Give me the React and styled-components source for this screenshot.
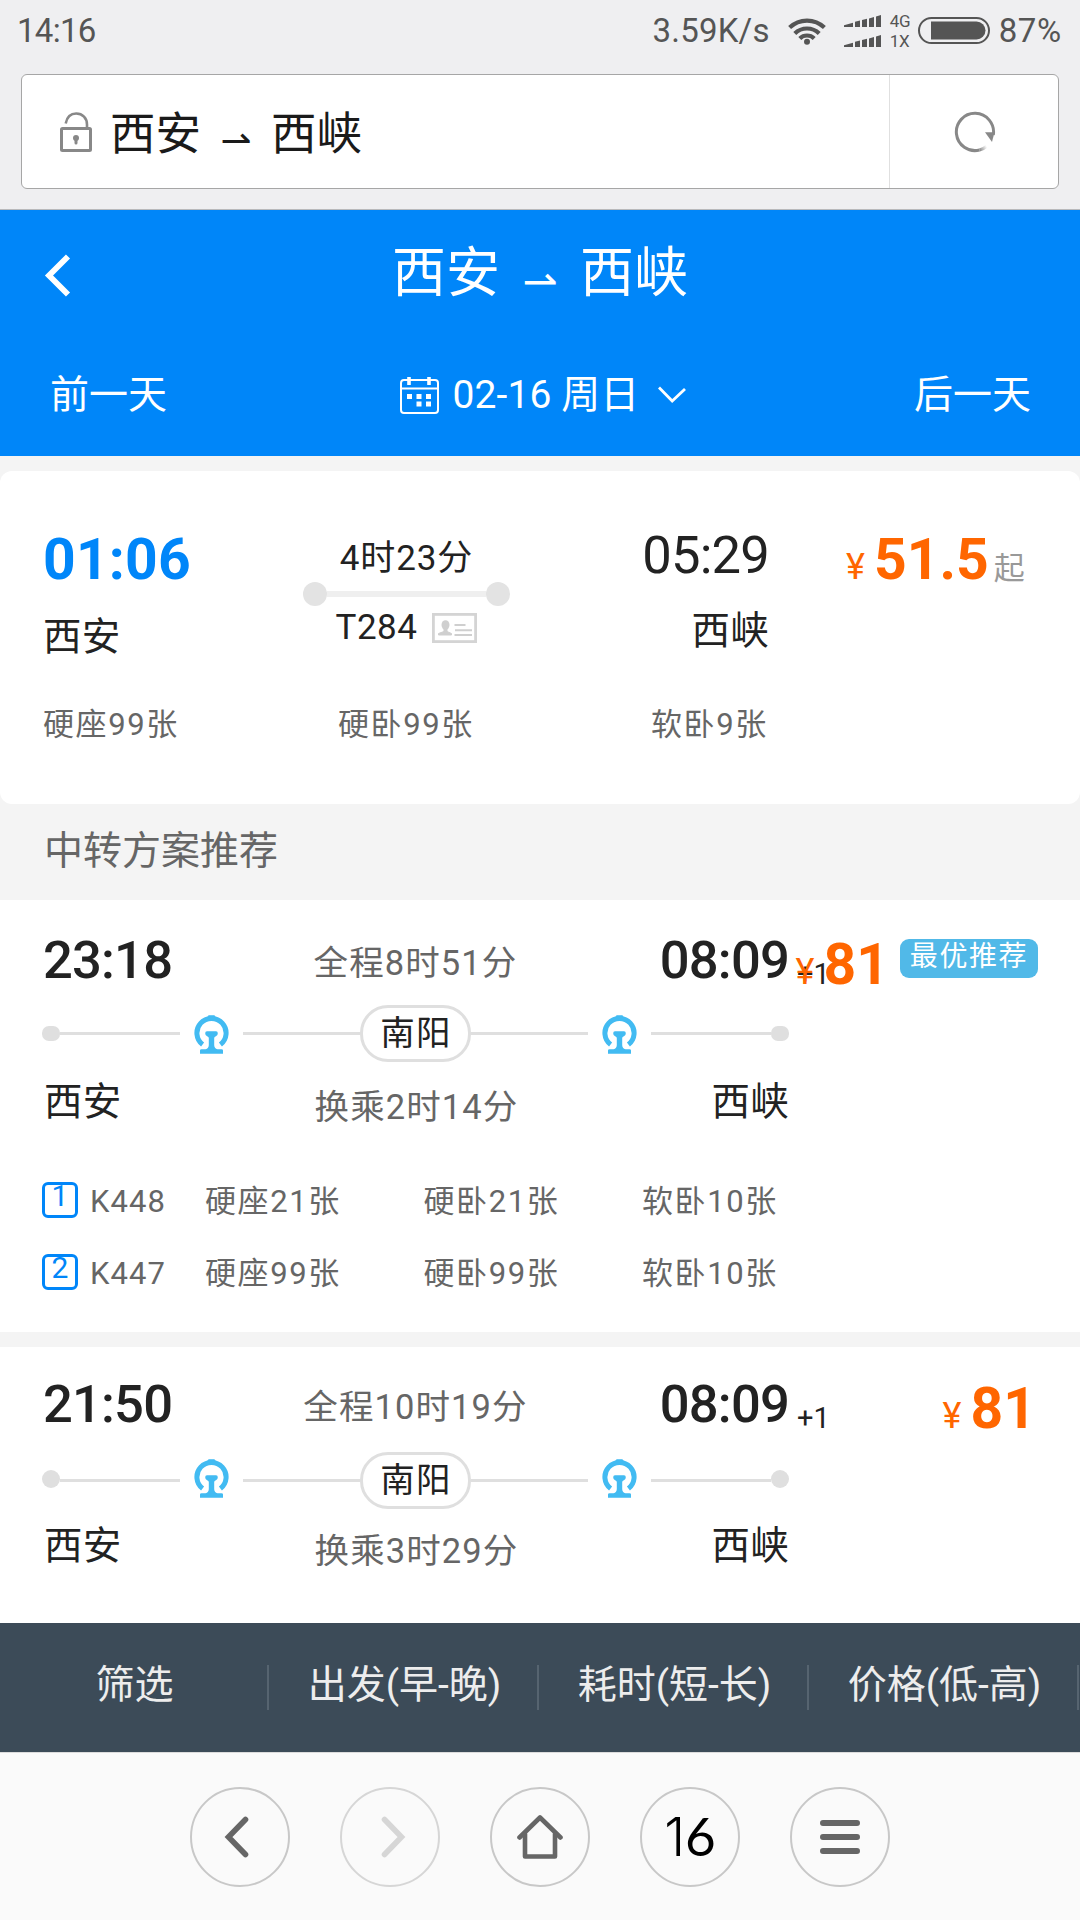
import React from 'react';
import styled, { createGlobalStyle } from 'styled-components';

const BLUE = '#0086f9';
const ORANGE = '#ff6600';
const INK = '#222';
const GREY = '#666';
const RAIL = '#dfdfdf';

const GlobalStyle = createGlobalStyle`
  * { box-sizing: border-box; }
  body {
    margin: 0;
    background: #f4f4f4;
    font-family: Roboto, "Noto Sans CJK SC", sans-serif;
    color: ${INK};
  }
`;

const Screen = styled.div`
  width: 1080px;
  height: 1920px;
  overflow: hidden;
  display: flex;
  flex-direction: column;
  background: #f4f4f4;
  white-space: nowrap;
`;

/* ---------- status bar ---------- */
const StatusBar = styled.div`
  height: 74px;
  padding: 0 18px 13px 17px;
  display: flex;
  align-items: center;
  background: #efeff1;
  color: #555;
  font-size: 33px;
  line-height: 40px;
`;
const Clock = styled.span`
  flex: 1;
  padding-top: 1px;
  letter-spacing: -0.7px;
`;
const Speed = styled.span`
  padding-top: 1px;
  letter-spacing: 0.2px;
  margin-right: 18px;
`;
const SignalStack = styled.div`
  display: flex;
  flex-direction: column;
  gap: 8px;
  margin: 0 8px 0 18px;
`;
const NetStack = styled.div`
  width: 28px;
  display: flex;
  flex-direction: column;
  font-size: 17px;
  line-height: 20px;
  letter-spacing: -0.3px;
`;
const Percent = styled.span`
  padding-top: 1px;
  margin-left: 9px;
  letter-spacing: 0.7px;
`;

/* ---------- address bar ---------- */
const AddressBar = styled.div`
  height: 136px;
  padding: 0 21px;
  background: #efeff1;
  border-bottom: 1px solid #b9b9bb;
`;
const AddressBox = styled.div`
  height: 115px;
  display: flex;
  border: 1px solid #a6a6a6;
  border-radius: 6px;
  background: #fff;
`;
const AddressMain = styled.div`
  flex: 1;
  display: flex;
  align-items: center;
  padding: 0 0 0 38px;
  border-right: 1px solid #e0e0e0;
`;
const AddressText = styled.div`
  display: flex;
  align-items: center;
  margin: 6px 0 0 18px;
  font-size: 45.5px;
  line-height: 60px;
  color: #1a1a1a;
`;
const Reload = styled.div`
  width: 168px;
  padding-left: 2px;
  display: flex;
  align-items: center;
  justify-content: center;
`;
const Harpoon = styled.span`
  display: inline-block;
  width: ${(p) => p.$width}px;
  margin: ${(p) => p.$drop}px ${(p) => p.$gap}px 0;
  font-family: "DejaVu Sans", sans-serif;
  font-size: ${(p) => p.$size}px;
  line-height: 1;
  text-align: center;
`;

/* ---------- blue header ---------- */
const Header = styled.header`
  height: 246px;
  background: ${BLUE};
  color: #fff;
`;
const TitleRow = styled.div`
  height: 124px;
  display: grid;
  grid-template-columns: 90px 1fr 90px;
  align-items: center;
`;
const BackSlot = styled.div`
  padding: 11px 0 0 44px;
`;
const Title = styled.h1`
  margin: 0;
  padding-top: 4px;
  display: flex;
  align-items: center;
  justify-content: center;
  font-size: 54px;
  line-height: 70px;
  font-weight: 400;
`;
const DayRow = styled.div`
  height: 122px;
  padding: 0 49px 0 50px;
  display: flex;
  justify-content: space-between;
  align-items: center;
  font-size: 39px;
  line-height: 56px;
`;
const DatePick = styled.div`
  margin-left: 5px;
  display: flex;
  align-items: center;
`;
const DateText = styled.span`
  margin: 0 19px 0 14px;
  letter-spacing: 0.1px;
`;

/* ---------- shared ---------- */
const Station = styled.div`
  font-size: 38.5px;
  letter-spacing: 0.3px;
  line-height: 48px;
  text-align: ${(p) => p.$align || 'left'};
`;
const Price = styled.div`
  display: flex;
  align-items: baseline;
  color: ${ORANGE};
  line-height: 60px;
`;
const Yen = styled.span`
  width: 28px;
  font-size: 36px;
`;
const Amount = styled.span`
  font-size: 57px;
  font-weight: 700;
`;
const From = styled.span`
  margin-left: 5px;
  font-size: 31px;
  color: #999;
`;
const Seat = styled.span`
  font-size: 31px;
  letter-spacing: ${(p) => (p.$tight ? 1.1 : 1.6)}px;
  line-height: 40px;
  color: ${GREY};
`;

/* ---------- direct train ---------- */
const DirectCard = styled.section`
  height: 333px;
  margin-top: 15px;
  border-radius: 12px;
  background: #fff;
`;
const DirectTop = styled.div`
  height: 234px;
  padding-left: 43px;
  display: flex;
`;
const DepartCol = styled.div`
  width: 260px;
  padding-top: 59px;
`;
const DepartTime = styled.div`
  font-size: 57px;
  line-height: 60px;
  font-weight: 700;
  color: ${BLUE};
  letter-spacing: 0.2px;
  margin-bottom: 23px;
`;
const TripCol = styled.div`
  width: 207px;
  padding-top: 68px;
  font-size: 35px;
  line-height: 40px;
  letter-spacing: 0.9px;
  text-align: center;
`;
const TripLine = styled.div`
  height: 24px;
  margin: 3px 0 2px;
  display: flex;
  align-items: center;
`;
const TripDot = styled.i`
  width: 24px;
  height: 24px;
  border-radius: 50%;
  background: #e3e3e3;
`;
const TripBar = styled.i`
  flex: 1;
  height: 6px;
  background: #efefef;
`;
const TrainNo = styled.div`
  display: flex;
  justify-content: center;
  align-items: center;
  gap: 15px;
  letter-spacing: 0.5px;
`;
const ArriveCol = styled.div`
  width: 259px;
  padding-top: 54px;
`;
const ArriveTime = styled.div`
  font-size: 52.5px;
  line-height: 60px;
  margin-bottom: 22px;
  letter-spacing: -0.8px;
  text-align: right;
`;
const DirectPrice = styled.div`
  padding: 59px 0 0 77px;
`;
const DirectSeats = styled.div`
  padding-left: 43px;
  display: grid;
  grid-template-columns: 295px 313px 1fr;
`;

const SectionTitle = styled.h2`
  margin: 0;
  height: 96px;
  padding: 0 0 2px 44px;
  font-size: 39px;
  line-height: 94px;
  font-weight: 400;
  color: ${GREY};
`;

/* ---------- transfer plans ---------- */
const Plan = styled.section`
  height: ${(p) => p.$height}px;
  flex: none;
  margin-bottom: 15px;
  background: #fff;
`;
const PlanHead = styled.div`
  height: 105px;
  padding-top: ${(p) => 27 + p.$lead}px;
  padding-left: 42px;
  display: flex;
`;
const Ends = styled.div`
  flex: none;
  width: 747px;
  height: 60px;
  position: relative;
  display: grid;
  grid-template-columns: 1fr auto 1fr;
`;
const PlanTime = styled.div`
  padding-left: 1px;
  font-size: 52.5px;
  line-height: 60px;
  font-weight: 500;
  letter-spacing: -0.8px;
  text-align: ${(p) => p.$align || 'left'};
`;
const Span = styled.div`
  padding-top: ${(p) => p.$top}px;
  font-size: 34.5px;
  letter-spacing: 1.1px;
  line-height: ${(p) => (p.$top ? 60 : 58)}px;
  color: ${GREY};
`;
const NextDay = styled.span`
  position: absolute;
  left: 755px;
  top: 14px;
  font-size: 29px;
  line-height: 60px;
`;
const PlanPrice = styled.div`
  position: relative;
  flex: 1;
  display: flex;
  justify-content: flex-end;
  padding: 5px ${(p) => (p.$tagged ? 42 : 44)}px 0 0;
`;
const Tag = styled.span`
  height: 39px;
  width: 138px;
  flex: none;
  margin: 4px 0 0 11px;
  border-radius: 9px;
  background: #51b9e8;
  color: #fff;
  font-size: 28px;
  letter-spacing: 1.6px;
  line-height: 35px;
  text-align: center;
`;
const Track = styled.div`
  width: 747px;
  height: 57px;
  margin-left: 42px;
  display: flex;
  align-items: center;
`;
const Rail = styled.i`
  width: ${(p) => (p.$inner ? 117 : 120)}px;
  height: 3px;
  background: ${RAIL};
`;
const Stop = styled.i`
  width: 18px;
  height: ${(p) => (p.$flat ? 15 : 18)}px;
  margin-bottom: ${(p) => (p.$flat ? 0 : 3)}px;
  border-radius: ${(p) => (p.$flat ? '7px' : '50%')};
  background: ${RAIL};
`;
const RailLogo = styled.span`
  width: 63px;
  height: 39px;
  display: flex;
  justify-content: center;
  margin-top: ${(p) => p.$drop}px;
`;
const Via = styled.span`
  width: 111px;
  height: 57px;
  padding-left: 1px;
  border: 3px solid ${RAIL};
  border-radius: 28px;
  font-size: 34.5px;
  letter-spacing: 1.2px;
  line-height: 50px;
  text-align: center;
`;
const PlanFoot = styled.div`
  width: 747px;
  margin-left: 42px;
  padding: ${(p) => 12.5 + p.$lead}px 0 0 2px;
  display: grid;
  grid-template-columns: 1fr auto 1fr;
  height: 120px;
`;
const Leg = styled.div`
  height: 36px;
  margin: 0 0 36px 42px;
  display: grid;
  grid-template-columns: 48px 115px 218.5px 218.5px 1fr;
  align-items: center;
`;
const LegNo = styled.span`
  align-self: start;
  width: 36px;
  height: 36px;
  border: 3px solid ${BLUE};
  border-radius: 6px;
  color: ${BLUE};
  font-size: 30px;
  line-height: 21px;
  text-align: center;
`;

/* ---------- sort bar ---------- */
const SortBar = styled.nav`
  height: 129px;
  flex: none;
  margin-top: -15px;
  display: flex;
  background: #3c4b58;
`;
const SortItem = styled.div`
  flex: none;
  width: 270px;
  display: flex;
  align-items: center;
  padding: 0 1px 1px 0;
  color: #ededed;
`;
const SortLabel = styled.span`
  flex: 1;
  padding: 0 0 4px 2px;
  font-size: 39px;
  line-height: 56px;
  text-align: center;
`;
const SortRule = styled.i`
  width: 2px;
  height: 45px;
  background: #566470;
`;

/* ---------- browser bar ---------- */
const BrowserBar = styled.footer`
  height: 168px;
  flex: none;
  border-top: 1px solid #dcdcdc;
  background: #fafafa;
  display: flex;
  justify-content: center;
  align-items: center;
  gap: 50px;
`;
const RoundButton = styled.div`
  width: 100px;
  height: 100px;
  padding: 0 ${(p) => p.$padRight || 0}px 0 ${(p) => p.$padLeft || 0}px;
  border: 2px solid ${(p) => (p.$dim ? '#d6d6d6' : '#c8c8c8')};
  border-radius: 50%;
  display: flex;
  align-items: center;
  justify-content: center;
`;
const TabCount = styled.span`
  font-family: Inter, sans-serif;
  font-size: 53px;
  line-height: 60px;
  font-weight: 300;
  color: #000;
`;
const RoundDigit = styled.span`
  font-family: Lato, sans-serif;
  font-weight: 400;
`;

const WifiIcon = () => (
  <svg width="38" height="28" viewBox="0 0 38 28" fill="none" stroke="#555" strokeWidth="4.2">
    <path d="M1.6 10.6a25 25 0 0 1 34.8 0" />
    <path d="M6.8 16.4a17.6 17.6 0 0 1 24.4 0" />
    <path d="M11.8 21.4a10.4 10.4 0 0 1 14.4 0" />
    <circle cx="19" cy="24.8" r="3" fill="#555" stroke="none" />
  </svg>
);

const SignalIcon = () => (
  <svg width="38" height="12" viewBox="0 0 38 12" fill="#555">
    <path d="M0 12V10.2L9 7.8V12ZM11 12V6.8L16 5.4V12ZM18 12V5L23 3.8V12ZM25 12V3.4L30 2V12ZM32 12V1.6L37 0V12Z" />
  </svg>
);

const BatteryIcon = () => (
  <svg width="72" height="27" viewBox="0 0 72 27">
    <rect x="1" y="1" width="70" height="25" rx="12.5" fill="none" stroke="#555" strokeWidth="2" />
    <path d="M13 4.5H58.5a9 9 0 0 1 0 18H13Z" fill="#555" />
  </svg>
);

const LockIcon = () => (
  <svg width="32" height="40" viewBox="0 0 32 40" fill="none" stroke="#888" strokeWidth="3">
    <rect x="1.5" y="16.5" width="29" height="22" rx="1" />
    <path d="M5.7 11.4C7 5 11 1.5 16.2 1.5c6.3 0 10.8 4.5 10.8 11V16" strokeWidth="2.6" />
    <circle cx="16" cy="26" r="3" fill="#888" stroke="none" />
    <path d="M16 26V31" strokeLinecap="round" />
  </svg>
);

const ReloadIcon = () => (
  <svg width="42" height="42" viewBox="0 0 42 42" fill="none">
    <defs>
      <linearGradient id="tail" x1="26" y1="40" x2="33" y2="36" gradientUnits="userSpaceOnUse">
        <stop offset="0" stopColor="#888" />
        <stop offset="1" stopColor="#888" stopOpacity="0" />
      </linearGradient>
    </defs>
    <path d="M39.3 24A18.6 18.6 0 1 0 25.5 39" stroke="#888" strokeWidth="3" />
    <path d="M25.5 39A18.6 18.6 0 0 0 33 35" stroke="url(#tail)" strokeWidth="3" />
    <path d="M31 21.2H40.5L38 31Z" fill="#888" />
  </svg>
);

const BackIcon = () => (
  <svg width="27" height="43" viewBox="0 0 27 43" fill="none" stroke="#fff" strokeWidth="5.8">
    <path d="M24 2.5L5 21.5L24 40.5" />
  </svg>
);

const CalendarIcon = () => (
  <svg width="39" height="38" viewBox="0 0 39 38" fill="none" stroke="#fff" strokeWidth="2">
    <rect x="1" y="4" width="37" height="33" rx="3" />
    <path d="M1 12.5H38" strokeWidth="1.8" />
    <path d="M9 1V9M29 1V9" strokeWidth="3.6" />
    <g fill="#fff" stroke="none">
      <rect x="7" y="18" width="5" height="5" />
      <rect x="16.500" y="18" width="5" height="5" />
      <rect x="26" y="18" width="5" height="5" />
      <rect x="16.500" y="25.500" width="5" height="5" />
      <rect x="26" y="25.500" width="5" height="5" />
    </g>
  </svg>
);

const DownIcon = () => (
  <svg width="28" height="18" viewBox="0 0 28 18" fill="none" stroke="#fff" strokeWidth="2.8">
    <path d="M1 1.5L14.2 15L27 3" />
  </svg>
);

const IdCardIcon = () => (
  <svg width="45" height="30" viewBox="0 0 45 30" fill="none">
    <rect x="1.4" y="1.4" width="42.2" height="27.2" stroke="#d4d4d4" strokeWidth="2.8" />
    <ellipse cx="13.5" cy="12" rx="4" ry="4.8" fill="#cfcfcf" />
    <path d="M12 15h3v3.5l4.5 2V22H6.500V20.500l5.500-2Z" fill="#cfcfcf" stroke="#cfcfcf" />
    <path d="M22.500 12H33.500M23 17.200H40M22.500 22H40" stroke="#cfcfcf" strokeWidth="2" />
  </svg>
);

const RailwayIcon = () => (
  <svg width="35" height="39" viewBox="0 0 35 39">
    <path d="M8.600 29.600A14.600 14.600 0 1 1 26.400 29.600" fill="none" stroke="#42bbf2" strokeWidth="5" />
    <path d="M13.500 3.500L14.500 0.800H20.500L21.500 3.500Z" fill="#42bbf2" stroke="#42bbf2" strokeLinejoin="round" />
    <path
      d="M13 16.200H22Q23.800 16.200 23.800 18.200Q23.800 20.800 21.900 21.200Q20.200 21.600 20.200 23V30Q20.200 33.400 23.500 34.200H27.500Q29 34.200 29 35.500V38.700H6V35.500Q6 34.200 7.500 34.200H11.500Q14.800 33.400 14.800 30V23Q14.800 21.600 13.100 21.200Q11.200 20.800 11.200 18.200Q11.200 16.200 13 16.200Z"
      fill="#42bbf2"
    />
  </svg>
);

const ChevronIcon = ({ flip, color }) => (
  <svg width="26" height="42" viewBox="0 0 26 42" fill="none" stroke={color} strokeWidth="5.6" strokeLinecap="round">
    <path d={flip ? 'M3.5 3.5L20.5 21L3.5 38.5' : 'M22.5 3.5L5.5 21L22.5 38.5'} />
  </svg>
);

const HomeIcon = () => (
  <svg width="46" height="44" viewBox="0 0 46 44" fill="none" stroke="#666" strokeWidth="4.6" strokeLinecap="round" strokeLinejoin="round">
    <path d="M2.5 22.5L23 2.5L43.5 22.5" />
    <path d="M8 19V41.5H38V19" />
  </svg>
);

const MenuIcon = () => (
  <svg width="40" height="34" viewBox="0 0 40 34" stroke="#666" strokeWidth="6" strokeLinecap="round">
    <path d="M3 3H37M3 17H37M3 31H37" />
  </svg>
);

const plans = [
  {
    depart: '23:18',
    arrive: '08:09',
    total: '全程8时51分',
    wait: '换乘2时14分',
    price: '81',
    tag: '最优推荐',
    lead: 3,
    height: 432,
    legs: [
      ['1', 'K448', '硬座21张', '硬卧21张', '软卧10张'],
      ['2', 'K447', '硬座99张', '硬卧99张', '软卧10张'],
    ],
  },
  {
    depart: '21:50',
    arrive: '08:09',
    total: '全程10时19分',
    wait: '换乘3时29分',
    price: '81',
    lead: 0,
    height: 276,
    legs: [],
  },
];

const sorts = ['筛选', '出发(早-晚)', '耗时(短-长)', '价格(低-高)'];

function TransferPlan({ plan }) {
  const flat = plan.lead > 0;
  return (
    <Plan $height={plan.height}>
      <PlanHead $lead={plan.lead}>
        <Ends>
          <PlanTime>{plan.depart}</PlanTime>
          <Span $top={3}>{plan.total}</Span>
          <PlanTime $align="right">{plan.arrive}</PlanTime>
          <NextDay>+1</NextDay>
        </Ends>
        <PlanPrice $tagged={!!plan.tag}>
          <Price>
            <Yen>¥</Yen>
            <Amount>{plan.price}</Amount>
          </Price>
          {plan.tag && <Tag>{plan.tag}</Tag>}
        </PlanPrice>
      </PlanHead>
      <Track>
        <Stop $flat={flat} />
        <Rail />
        <RailLogo $drop={flat ? 1 : -5}>
          <RailwayIcon />
        </RailLogo>
        <Rail $inner />
        <Via>南阳</Via>
        <Rail $inner />
        <RailLogo $drop={flat ? 1 : -5}>
          <RailwayIcon />
        </RailLogo>
        <Rail />
        <Stop $flat={flat} />
      </Track>
      <PlanFoot $lead={plan.lead}>
        <Station>西安</Station>
        <Span $top={0}>{plan.wait}</Span>
        <Station $align="right">西峡</Station>
      </PlanFoot>
      {plan.legs.map(([no, train, ...seats]) => (
        <Leg key={no}>
          <LegNo>{no}</LegNo>
          <Seat $tight>{train}</Seat>
          {seats.map((s) => (
            <Seat key={s}>{s}</Seat>
          ))}
        </Leg>
      ))}
    </Plan>
  );
}

export default function App() {
  return (
    <>
      <GlobalStyle />
      <Screen>
        <StatusBar>
          <Clock>14:16</Clock>
          <Speed>3.59K/s</Speed>
          <WifiIcon />
          <SignalStack>
            <SignalIcon />
            <SignalIcon />
          </SignalStack>
          <NetStack>
            <span>4G</span>
            <span>1X</span>
          </NetStack>
          <BatteryIcon />
          <Percent>87%</Percent>
        </StatusBar>

        <AddressBar>
          <AddressBox>
            <AddressMain>
              <LockIcon />
              <AddressText>
                西安
                <Harpoon $size={37} $width={36} $gap={17} $drop={11}>⇀</Harpoon>
                西峡
              </AddressText>
            </AddressMain>
            <Reload>
              <ReloadIcon />
            </Reload>
          </AddressBox>
        </AddressBar>

        <Header>
          <TitleRow>
            <BackSlot>
              <BackIcon />
            </BackSlot>
            <Title>
              西安
              <Harpoon $size={42} $width={44} $gap={18} $drop={15}>⇀</Harpoon>
              西峡
            </Title>
          </TitleRow>
          <DayRow>
            <span>前一天</span>
            <DatePick>
              <CalendarIcon />
              <DateText>02-16 周日</DateText>
              <DownIcon />
            </DatePick>
            <span>后一天</span>
          </DayRow>
        </Header>

        <DirectCard>
          <DirectTop>
            <DepartCol>
              <DepartTime>01:06</DepartTime>
              <Station>西安</Station>
            </DepartCol>
            <TripCol>
              4时23分
              <TripLine>
                <TripDot />
                <TripBar />
                <TripDot />
              </TripLine>
              <TrainNo>
                T284
                <IdCardIcon />
              </TrainNo>
            </TripCol>
            <ArriveCol>
              <ArriveTime>05:29</ArriveTime>
              <Station $align="right">西峡</Station>
            </ArriveCol>
            <DirectPrice>
              <Price>
                <Yen>¥</Yen>
                <Amount>51.5</Amount>
                <From>起</From>
              </Price>
            </DirectPrice>
          </DirectTop>
          <DirectSeats>
            <Seat>硬座99张</Seat>
            <Seat>硬卧99张</Seat>
            <Seat>软卧9张</Seat>
          </DirectSeats>
        </DirectCard>

        <SectionTitle>中转方案推荐</SectionTitle>

        {plans.map((p) => (
          <TransferPlan key={p.depart} plan={p} />
        ))}

        <SortBar>
          {sorts.map((s) => (
            <SortItem key={s}>
              <SortLabel>{s}</SortLabel>
              <SortRule />
            </SortItem>
          ))}
        </SortBar>

        <BrowserBar>
          <RoundButton $padRight={8}>
            <ChevronIcon color="#666" />
          </RoundButton>
          <RoundButton $dim $padLeft={8}>
            <ChevronIcon flip color="#d6d6d6" />
          </RoundButton>
          <RoundButton>
            <HomeIcon />
          </RoundButton>
          <RoundButton>
            <TabCount>1<RoundDigit>6</RoundDigit></TabCount>
          </RoundButton>
          <RoundButton>
            <MenuIcon />
          </RoundButton>
        </BrowserBar>
      </Screen>
    </>
  );
}
